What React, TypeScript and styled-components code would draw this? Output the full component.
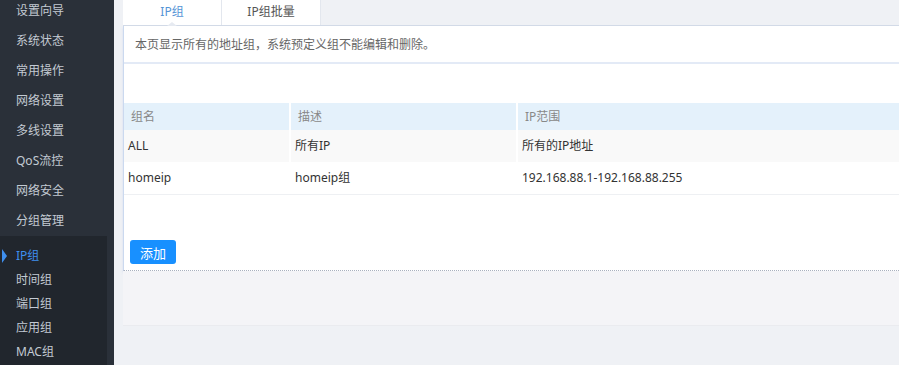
import styled, { createGlobalStyle } from "styled-components";

const GlobalStyle = createGlobalStyle`
  html, body {
    margin: 0;
    padding: 0;
    background: #eff1f5;
    font-family: "Noto Sans", "Noto Sans CJK SC", sans-serif;
    font-size: 12px;
    overflow: hidden;
  }
`;

const Layout = styled.div`
  display: flex;
  width: 899px;
  height: 365px;
  overflow: hidden;
`;

const Sidebar = styled.nav`
  width: 114px;
  flex-shrink: 0;
  background: #2a3039;
  display: flex;
  flex-direction: column;
`;

const MenuList = styled.ul`
  list-style: none;
  margin: -4px 0 0;
  padding: 0;
`;

const MenuItem = styled.li`
  height: 30px;
  line-height: 30px;
  padding-left: 16px;
  color: #c3cad3;
  font-size: 12px;
`;

const SubMenu = styled.ul`
  list-style: none;
  margin: 0 7px 0 0;
  padding: 8px 0 0;
  background: #21262d;
  flex: 1;
`;

const SubItem = styled.li<{ $active?: boolean }>`
  position: relative;
  height: 24px;
  line-height: 24px;
  padding-left: 16px;
  font-size: 12px;
  color: ${(p) => (p.$active ? "#3f8fef" : "#c3cad3")};

  ${(p) =>
    p.$active &&
    `
    &::before {
      content: "";
      position: absolute;
      left: 2px;
      top: 5px;
      border-top: 7px solid transparent;
      border-bottom: 7px solid transparent;
      border-left: 5px solid #3f8fef;
    }
  `}
`;

const Main = styled.main`
  flex: 1;
  padding-left: 9px;
  display: flex;
  flex-direction: column;
`;

const Tabs = styled.div`
  display: flex;
  height: 25px;
  border-bottom: 1px solid #d3dbe8;
`;

const Tab = styled.div<{ $active?: boolean }>`
  position: relative;
  width: 98px;
  height: 25px;
  line-height: 24px;
  text-align: center;
  background: #fff;
  border-right: 1px solid #e3e7ee;
  font-size: 12px;
  color: ${(p) => (p.$active ? "#5594d6" : "#555")};

  ${(p) =>
    p.$active &&
    `
    &::after {
      content: "";
      position: absolute;
      left: 50%;
      bottom: -1px;
      margin-left: -5px;
      border-left: 5px solid transparent;
      border-right: 5px solid transparent;
      border-bottom: 4px solid #e6eaf1;
    }
  `}
`;

const Panel = styled.section`
  background: #fff;
  border-left: 1px solid #cbd9ef;
  border-bottom: 1px dotted #a9b0be;
  box-shadow: 0 2px 2px rgba(190, 200, 235, 0.5);
  padding-bottom: 6px;
`;

const Notice = styled.div`
  height: 36px;
  line-height: 38px;
  padding-left: 11px;
  color: #666;
  font-size: 12px;
  border-bottom: 2px solid #e3eaf6;
`;

const Toolbar = styled.div`
  height: 39px;
`;

const Table = styled.div`
  display: grid;
  grid-template-columns: 167px 227px 1fr;
  border-bottom: 1px solid #eef0f3;

  & > div:nth-child(3n) {
    border-right: none;
  }
`;

const HeadCell = styled.div`
  height: 27px;
  line-height: 27px;
  padding-left: 7px;
  background: #e4f1fb;
  color: #888;
  border-right: 2px solid #fff;
`;

const Cell = styled.div<{ $striped?: boolean }>`
  height: 32px;
  line-height: 32px;
  padding-left: 4px;
  color: #333;
  background: ${(p) => (p.$striped ? "#f9f9f9" : "#fff")};
  border-right: 2px solid ${(p) => (p.$striped ? "#fff" : "transparent")};
`;

const Actions = styled.div`
  padding: 45px 0 0 6px;
`;

const AddButton = styled.button`
  width: 46px;
  height: 24px;
  border: none;
  border-radius: 3px;
  background: #1890ff;
  color: #fff;
  font-family: inherit;
  font-size: 13px;
  padding: 0;
`;

const Footer = styled.div`
  height: 54px;
  background: #f4f4f7;
  border-bottom: 1px solid #eaebef;
`;

const menu = ["设置向导", "系统状态", "常用操作", "网络设置", "多线设置", "QoS流控", "网络安全", "分组管理"];
const subMenu = ["IP组", "时间组", "端口组", "应用组", "MAC组"];

const rows = [
  ["ALL", "所有IP", "所有的IP地址"],
  ["homeip", "homeip组", "192.168.88.1-192.168.88.255"],
];

export default function App() {
  return (
    <>
      <GlobalStyle />
      <Layout>
        <Sidebar>
          <MenuList>
            {menu.map((m) => (
              <MenuItem key={m}>{m}</MenuItem>
            ))}
          </MenuList>
          <SubMenu>
            {subMenu.map((s, i) => (
              <SubItem key={s} $active={i === 0}>
                {s}
              </SubItem>
            ))}
          </SubMenu>
        </Sidebar>
        <Main>
          <Tabs>
            <Tab $active>IP组</Tab>
            <Tab>IP组批量</Tab>
          </Tabs>
          <Panel>
            <Notice>本页显示所有的地址组，系统预定义组不能编辑和删除。</Notice>
            <Toolbar />
            <Table>
              <HeadCell>组名</HeadCell>
              <HeadCell>描述</HeadCell>
              <HeadCell>IP范围</HeadCell>
              {rows.map((r, i) =>
                r.map((c, j) => (
                  <Cell key={`${i}-${j}`} $striped={i % 2 === 0}>
                    {c}
                  </Cell>
                ))
              )}
            </Table>
            <Actions>
              <AddButton>添加</AddButton>
            </Actions>
          </Panel>
          <Footer />
        </Main>
      </Layout>
    </>
  );
}
